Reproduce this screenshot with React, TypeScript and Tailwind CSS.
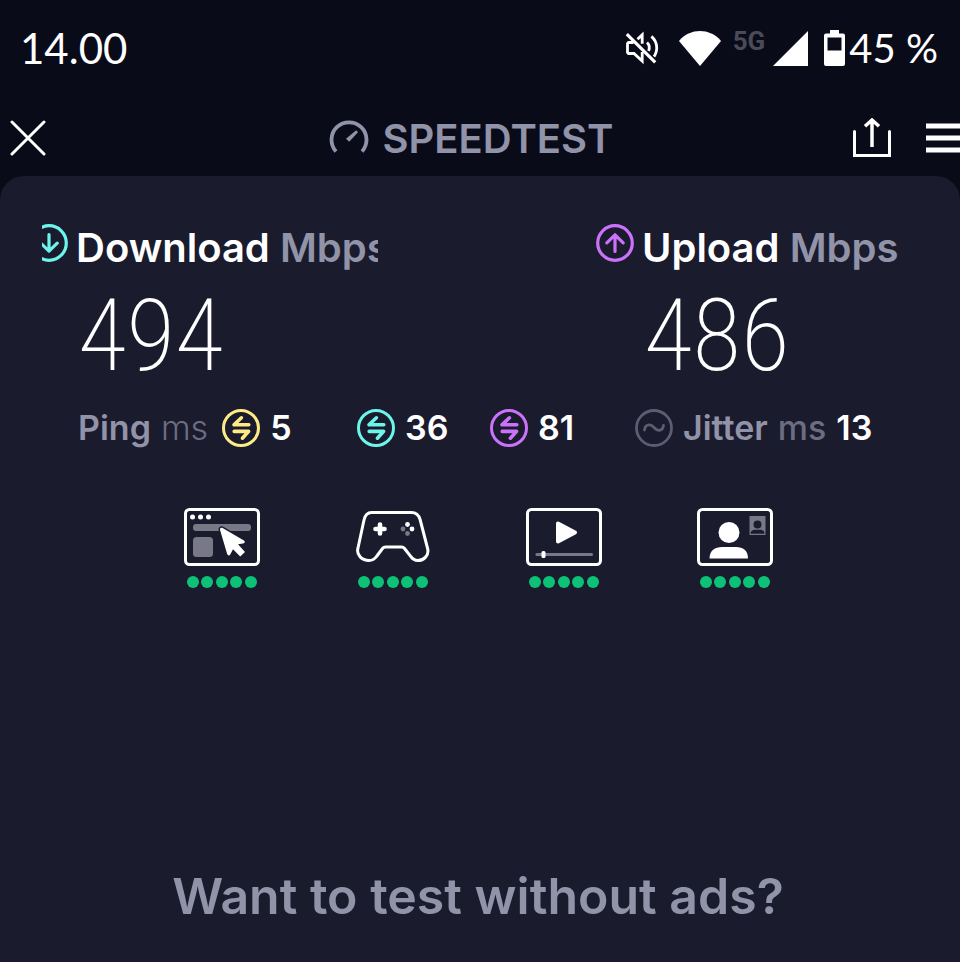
import React from "react";

interface Latency {
  label: string;
  value: number;
  color: string;
}

const latencies: Latency[] = [
  { label: "Download ping", value: 36, color: "text-[#6cf5ea]" },
  { label: "Upload ping", value: 81, color: "text-[#cb72fb]" },
];

function CircleArrow({ up, className }: { up?: boolean; className: string }) {
  return (
    <svg viewBox="0 0 38 38" className={`size-[38px] shrink-0 ${className}`} fill="none" stroke="currentColor" strokeWidth="3.2" aria-hidden="true">
      <circle cx="19" cy="19" r="17.3" />
      {up ? (
        <path d="M19 27.5V11M10.8 18.8 19 10.8l8.2 8" strokeLinecap="round" strokeLinejoin="round" />
      ) : (
        <path d="M19 10.5V27M10.8 19.2 19 27.2l8.2-8" strokeLinecap="round" strokeLinejoin="round" />
      )}
    </svg>
  );
}

function PingIcon({ className }: { className: string }) {
  return (
    <svg viewBox="0 0 38 38" className={`size-[38px] shrink-0 ${className}`} fill="none" stroke="currentColor" aria-hidden="true">
      <circle cx="19" cy="19" r="17.5" strokeWidth="3" />
      <path d="M19.4 8.8 12 15.8H26.8M12.2 22.4H26.6L20.4 29.2" strokeWidth="3.6" strokeLinecap="round" strokeLinejoin="round" />
    </svg>
  );
}

function Rating({ label, children }: { label: string; children: React.ReactNode }) {
  return (
    <li className="flex flex-col items-center" aria-label={label}>
      <svg viewBox="0 0 76 58" className="h-[58px] w-[76px]" fill="none" aria-hidden="true">
        {children}
      </svg>
      <div className="mt-2.5 flex w-[70px] justify-between">
        {Array.from({ length: 5 }).map((_, i) => (
          <span key={i} className="size-3 rounded-full bg-[#0dc276]" />
        ))}
      </div>
    </li>
  );
}

function StatusBar() {
  return (
    <div className="flex h-[100px] items-center justify-between pb-1 pl-5 pr-[22px] font-[Lato,sans-serif] text-[42px]">
      <span>14.00</span>
      <div className="flex items-center">
        {/* muted speaker */}
        <svg viewBox="0 0 34 34" className="size-[34px]" fill="none" stroke="currentColor" strokeWidth="2.8" aria-hidden="true">
          <path d="M8.5 11.5H3.500l-1 1v9l1 1H9l8.2 7.6V21M12.5 8.2l4.7-4.4v9" />
          <path d="M22 11.5c2.4 2.2 2.8 5.4 1.6 8.6M26.4 5.4c6 5.4 7 13.6 2.6 20.2" />
          <path d="M1.8 3.2 30.2 31.4" strokeWidth="3.2" />
        </svg>
        <svg viewBox="0 0 42 35" className="ml-5 h-[35px] w-[42px]" fill="currentColor" aria-hidden="true">
          <path d="M0 10C11-3.2 31-3.2 42 10L21 35Z" />
        </svg>
        <span className="ml-3 mb-3.5 font-[Roboto,sans-serif] text-[26px] font-bold text-[#4a4a58]">5G</span>
        <svg viewBox="0 0 35 35" className="ml-2 size-[35px]" fill="currentColor" aria-hidden="true">
          <path d="M35 0V35H0Z" />
        </svg>
        <svg viewBox="0 0 21 36" className="ml-4 h-9 w-[21px]" fill="currentColor" fillRule="evenodd" aria-hidden="true">
          <path d="M6 0h9v3.5h4a2 2 0 0 1 2 2V34a2 2 0 0 1-2 2H2a2 2 0 0 1-2-2V5.500a2 2 0 0 1 2-2h4ZM3.500 7.500V20.500h14V7.500Z" />
        </svg>
        <span className="ml-1 text-[40px]">45 %</span>
      </div>
    </div>
  );
}

function Header() {
  return (
    <header className="grid h-[76px] grid-cols-[1fr_auto_1fr] items-center pl-2.5 pr-7">
      <button type="button" aria-label="Close" className="justify-self-start">
        <svg viewBox="0 0 36 36" className="size-9" stroke="currentColor" strokeWidth="3" strokeLinecap="round" aria-hidden="true">
          <path d="M2 2 34 34M34 2 2 34" />
        </svg>
      </button>
      <div className="flex items-start gap-3.5 pt-0.5 text-[#9193a8]">
        <svg viewBox="0 0 40 34" className="h-[34px] w-10" fill="none" stroke="currentColor" strokeWidth="3.8" aria-hidden="true">
          <path d="M7 32.500A17.500 17.500 0 1 1 33 32.500" />
          <path d="M27.200 11.200 29 13.200 20.200 22.800 17 19.800Z" fill="currentColor" stroke="none" />
        </svg>
        <h1 className="text-[40px] font-semibold leading-none">SPEEDTEST</h1>
      </div>
      <div className="-mr-7 flex items-center gap-[35px] justify-self-end">
        <button type="button" aria-label="Share">
          <svg viewBox="0 0 38 40" className="h-10 w-[38px]" fill="none" stroke="currentColor" strokeWidth="3" aria-hidden="true">
            <path d="M1.500 13.500V37.500H36.500V13.500" strokeLinecap="round" />
            <path d="M19 29V3M12 8.200 19 2l7 6.200" strokeWidth="3.500" />
          </svg>
        </button>
        <button type="button" aria-label="Menu">
          <svg viewBox="0 0 34 32" className="h-8 w-[34px]" stroke="currentColor" strokeWidth="5" aria-hidden="true">
            <path d="M0 4H34M0 16H34M0 28H34" />
          </svg>
        </button>
      </div>
    </header>
  );
}

export default function App() {
  return (
    <div className="flex min-h-screen flex-col overflow-hidden bg-[#0a0b19] font-[Inter,sans-serif] text-white">
      <StatusBar />
      <Header />

      <main className="flex flex-1 flex-col rounded-t-3xl bg-[#1b1b2e] pt-12 pb-[34px]">
        <section className="grid grid-cols-[336fr_218fr_364fr] pl-[42px]">
          <div className="min-w-0">
            <div className="flex items-start gap-2 overflow-hidden whitespace-nowrap">
              <CircleArrow className="-ml-3 text-[#6cf5ea]" />
              <h2 className="text-[40px] font-semibold leading-[48px]">
                Download <span className="text-[#9193a8]">Mbps</span>
              </h2>
            </div>
            <p className="pl-9 font-['Roboto_Condensed',sans-serif] text-[100px] font-extralight leading-32">494</p>
          </div>
          <div className="col-start-3">
            <div className="flex items-start gap-2 whitespace-nowrap">
              <CircleArrow up className="text-[#cb72fb]" />
              <h2 className="text-[40px] font-semibold leading-[48px]">
                Upload <span className="text-[#9193a8]">Mbps</span>
              </h2>
            </div>
            <p className="pl-12 font-['Roboto_Condensed',sans-serif] text-[100px] font-extralight leading-32">486</p>
          </div>
        </section>

        <section className="mt-2 grid h-10 grid-cols-[279fr_133fr_145fr_325fr] items-center whitespace-nowrap pl-[78px] text-[34px] font-semibold leading-none">
          <div className="flex items-center gap-2.5">
            <span className="text-[#9193a8]">Ping</span>
            <span className="font-light text-[#6c6d80]">ms</span>
            <PingIcon className="ml-1 text-[#fdec86]" />
            <span>5</span>
          </div>
          {latencies.map((item) => (
            <div key={item.label} className="flex items-center gap-2.5" aria-label={item.label}>
              <PingIcon className={item.color} />
              <span>{item.value}</span>
            </div>
          ))}
          <div className="flex items-center gap-2.5">
            <svg viewBox="0 0 38 38" className="size-[38px] shrink-0 text-[#5c5d70]" fill="none" stroke="currentColor" strokeWidth="2.800" aria-hidden="true">
              <circle cx="19" cy="19" r="17.500" />
              <path d="M9.500 21c.5-6 6-6.500 9.500-2.500s8.500 4 9.500-2" strokeLinecap="round" />
            </svg>
            <span className="text-[#9193a8]">Jitter</span>
            <span className="font-medium text-[#6c6d80]">ms</span>
            <span>13</span>
          </div>
        </section>

        <ul className="mt-15 flex justify-center gap-[95px] pr-1">
          <Rating label="Web browsing">
            <rect x="1.500" y="1.500" width="73" height="55" rx="4" stroke="white" strokeWidth="3" />
            <g fill="white">
              <circle cx="8.500" cy="9" r="2.500" />
              <circle cx="16.500" cy="9" r="2.500" />
              <circle cx="24.500" cy="9" r="2.500" />
            </g>
            <rect x="9" y="16" width="58" height="7" rx="3" fill="#787887" />
            <rect x="9" y="29" width="20" height="20" rx="3.500" fill="#787887" />
            <path
              d="M36.200 22.500c-.8-2.200.8-3.400 2.800-2.300L59.500 32.300c2 1.200 1.500 3-.5 3.200l-5 .8 7 7.700-4.800 4.500-7.200-7.300-2.600 5c-1 1.900-2.600 1.600-3.400-.6Z"
              fill="white"
              stroke="#1b1b2e"
              strokeWidth="3"
              paintOrder="stroke"
            />
          </Rating>
          <Rating label="Gaming">
            <path
              d="M16.500 4.500H56.500c5 0 7.300 2.800 8.600 7l7.500 29c1.800 7-4 12-9.700 12-3 0-5.400-1.400-7-3.800L49.500 40.500c-.8-1-1.600-1.500-3-1.500h-16c-1.400 0-2.200.5-3 1.500L21.500 48.500c-1.700 2.400-4 4-7.400 4C7 52.500 1 47 3 40l6-28c1-4.500 3.500-7.500 7.500-7.500Z"
              stroke="white"
              strokeWidth="3"
            />
            <path d="M25 16.500v9M20.500 21h9" stroke="white" strokeWidth="4.600" strokeLinecap="round" />
            <circle cx="52.500" cy="16.500" r="2.400" fill="white" />
            <circle cx="57" cy="21" r="2.400" fill="white" />
            <circle cx="48" cy="21" r="2.400" fill="#787887" />
            <circle cx="52.500" cy="25.500" r="2.400" fill="#787887" />
          </Rating>
          <Rating label="Video streaming">
            <rect x="1.500" y="1.500" width="73" height="55" rx="4" stroke="white" strokeWidth="3" />
            <path d="M32 15.500v18L49 24.500Z" fill="white" stroke="white" strokeWidth="4" strokeLinejoin="round" />
            <path d="M11 46.500H65.500" stroke="#787887" strokeWidth="3.200" strokeLinecap="round" />
            <rect x="15.500" y="43" width="4" height="7" rx="1.500" fill="white" />
          </Rating>
          <Rating label="Video chat">
            <rect x="1.500" y="1.500" width="73" height="55" rx="4" stroke="white" strokeWidth="3" />
            <circle cx="32" cy="24.500" r="10.500" fill="white" />
            <path d="M12.500 50.500C12.500 42.500 18 39 25 39h14c7 0 12 3.500 12 11.500Z" fill="white" />
            <rect x="52.500" y="8" width="16" height="19" fill="#787887" />
            <circle cx="60.500" cy="16.500" r="4" fill="#1b1b2e" />
            <path d="M53.500 25.700c0-3 2.500-4 4.500-4h5c2 0 4.500 1 4.500 4Z" fill="#1b1b2e" />
          </Rating>
        </ul>

        <p className="mt-auto pr-1 text-center text-[50px] font-semibold leading-16 text-[#9193a8]">Want to test without ads?</p>
      </main>
    </div>
  );
}
